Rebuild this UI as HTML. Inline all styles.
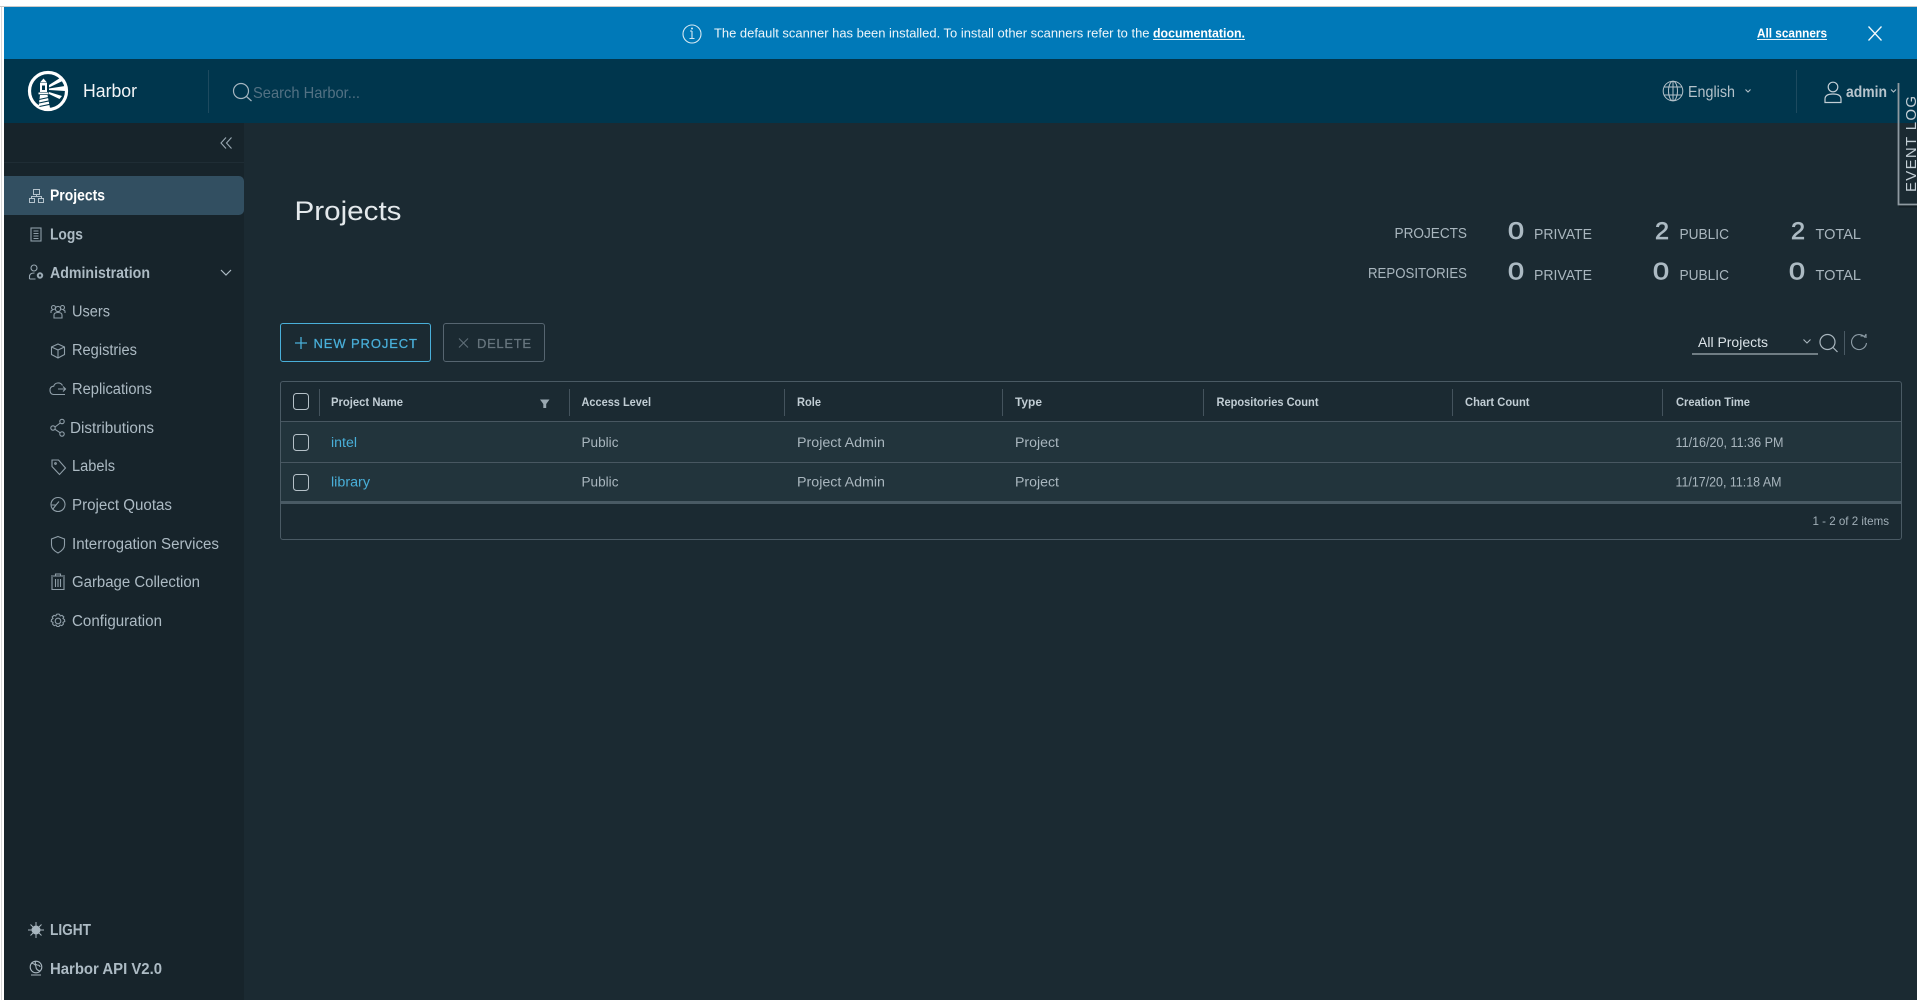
<!DOCTYPE html>
<html lang="en">
<head>
<meta charset="utf-8">
<title>Harbor</title>
<style>
html,body{margin:0;padding:0;background:#fff;width:1917px;height:1000px;overflow:hidden}
svg{display:block;position:absolute;left:0;top:0}
text{font-family:"Liberation Sans",sans-serif}
.nav{font-size:15.5px;fill:#adbbc4}
.b{font-weight:700}
.th{font-size:12px;font-weight:700;fill:#c1cdd4}
.td{font-size:13.5px;fill:#a9b6be}
.lnk{font-size:13.5px;fill:#49afd9}
.st{font-size:14.5px;fill:#a9b6be}
.num{font-size:24px;fill:#acbac3;stroke:#acbac3;stroke-width:.7px}
.ic{fill:none;stroke:#8f9ea8;stroke-width:1.1}
</style>
</head>
<body>
<svg width="1917" height="1000" viewBox="0 0 1917 1000" xmlns="http://www.w3.org/2000/svg">
<!-- surfaces -->
<rect width="1917" height="1000" fill="#fff"/>
<rect x="0" y="6" width="1917" height="1" fill="#c9c9c9"/>
<rect x="1" y="7" width="1" height="993" fill="#d8d8d8"/>
<rect x="4" y="7" width="1913" height="52" fill="#0079b8"/>
<rect x="4" y="59" width="1913" height="64" fill="#00364d"/>
<rect x="244" y="123" width="1673" height="877" fill="#1b2a32"/>
<rect x="4" y="123" width="240" height="877" fill="#17242b"/>
<rect x="4" y="162" width="240" height="1" fill="#1f2d35"/>
<path d="M4 176H239a5 5 0 0 1 5 5V210a5 5 0 0 1-5 5H4z" fill="#324f61"/>

<!-- banner -->
<g fill="none" stroke="#d5e8f2" stroke-width="1.1">
<circle cx="692" cy="34" r="9"/>
<path d="M692 31v7M689.5 38.5h5M690 31h2"/>
</g>
<circle cx="692" cy="28.5" r="1" fill="#d5e8f2"/>
<text x="714" y="37.5" font-size="13" fill="#eef6fa" textLength="435.5" lengthAdjust="spacingAndGlyphs">The default scanner has been installed. To install other scanners refer to the</text>
<text x="1153" y="37.5" font-size="13" font-weight="700" fill="#fff" textLength="92" lengthAdjust="spacingAndGlyphs">documentation.</text>
<rect x="1153" y="39" width="92" height="1" fill="#e6f2f8"/>
<text x="1757" y="37.5" font-size="13" font-weight="700" fill="#fff" textLength="70" lengthAdjust="spacingAndGlyphs">All scanners</text>
<rect x="1757" y="39" width="70" height="1" fill="#e6f2f8"/>
<path d="M1868.5 26.5l13 14M1881.5 26.5l-13 14" stroke="#f2f8fb" stroke-width="1.3" fill="none"/>

<!-- header -->
<circle cx="48" cy="91" r="18.5" fill="none" stroke="#fff" stroke-width="3.2"/>
<g fill="#fff">
<path d="M43.500 78.500l3.500 4h-7z"/>
<path d="M40 83h7v9h-7z"/>
<rect x="38.500" y="92.500" width="10" height="1.800"/>
<path d="M40 95h7.500l2.500 13-5 1.500-6.500-2.500z"/>
<path d="M49 85l11-7 2.500 3L49 87.500zM49 88.500l16-2.500v5l-16-1zM49 92l13 4-2.500 3L49 94z"/>
</g>
<rect x="42" y="85.500" width="3" height="4.500" fill="#00364d"/>
<path d="M39 99.500l9.500-2M39 103l10.500-2.200M39.500 106.500l10.500-2.200" stroke="#00364d" stroke-width="1.100"/>
<text x="83" y="97" font-size="18" fill="#f2f5f7" textLength="54" lengthAdjust="spacingAndGlyphs">Harbor</text>
<rect x="208" y="70" width="1" height="43" fill="#1d4a5f"/>
<g fill="none" stroke="#a5b6c0" stroke-width="1.2">
<circle cx="241" cy="91" r="7.5"/><path d="M246.5 96.5l5 4.5"/>
</g>
<text x="253" y="98" font-size="16" fill="#527183" textLength="107" lengthAdjust="spacingAndGlyphs">Search Harbor...</text>

<g fill="none" stroke="#b4c2ca" stroke-width="1">
<circle cx="1673" cy="91" r="9.8"/>
<ellipse cx="1673" cy="91" rx="4.5" ry="9.8"/>
<path d="M1673 81.2v19.6M1664 87h18M1664 95h18"/>
</g>
<text x="1688" y="97" font-size="16" fill="#b4c2ca" textLength="47" lengthAdjust="spacingAndGlyphs">English</text>
<path d="M1745.5 89.5l2.5 2.5 2.5-2.5" fill="none" stroke="#b4c2ca" stroke-width="1.1"/>
<rect x="1796" y="70" width="1" height="43" fill="#1d4a5f"/>
<g fill="none" stroke="#c2ced5" stroke-width="1.2">
<circle cx="1833" cy="87" r="4.8"/>
<path d="M1825 102.5v-3.5q0-5 8-5t8 5v3.5z"/>
</g>
<text x="1846" y="97" font-size="16" fill="#b8c5cd" font-weight="700" textLength="41" lengthAdjust="spacingAndGlyphs">admin</text>
<path d="M1891 89.5l2.5 2.5 2.5-2.5" fill="none" stroke="#b4c2ca" stroke-width="1.1"/>

<!-- event log tab -->
<rect x="1899" y="204.500" width="18" height="3" fill="#0d161b" opacity=".55"/>
<path d="M1898.5 83V204.500H1917" fill="none" stroke="#8f9aa1" stroke-width="1.8"/>
<text transform="translate(1916 192) rotate(-90)" font-size="15" fill="#c3ced5" textLength="96" lengthAdjust="spacing">EVENT LOG</text>

<!-- sidebar -->
<path d="M226 137.5l-5 5.5 5 5.5M231.5 137.5l-5 5.5 5 5.5" fill="none" stroke="#9aa9b3" stroke-width="1.1"/>
<g fill="none" stroke="#b5c3cc" stroke-width="1">
<rect x="33.5" y="189.5" width="6" height="5"/><rect x="29.5" y="198.5" width="5" height="4"/><rect x="38.5" y="198.5" width="5" height="4"/>
<path d="M36.5 194.5v2M31.5 198.5v-2h10v2"/>
</g>
<text x="50" y="200.5" class="nav b" style="fill:#fff" textLength="55" lengthAdjust="spacingAndGlyphs">Projects</text>
<g fill="none" stroke="#8f9ea8" stroke-width="1.1">
<rect x="31" y="228" width="10" height="13"/><path d="M33.5 231h5M33.5 233.5h5M33.5 236h5M33.5 238.5h5"/>
</g>
<text x="50" y="239.300" class="nav b" textLength="33" lengthAdjust="spacingAndGlyphs">Logs</text>
<g fill="none" stroke="#9aa9b3" stroke-width="1.1">
<circle cx="34" cy="268" r="3"/><path d="M29.5 279v-2.500q0-3.500 5-3.500M29.500 279h6"/>
<circle cx="40" cy="275.500" r="2.200" stroke-width="2"/>
</g>
<text x="50" y="278" class="nav b" textLength="100" lengthAdjust="spacingAndGlyphs">Administration</text>
<path d="M221 270l5 5 5-5" fill="none" stroke="#adbbc4" stroke-width="1.2"/>

<g class="ic">
<!-- users -->
<circle cx="58" cy="309" r="2.600"/><circle cx="53.500" cy="307.500" r="2"/><circle cx="62.500" cy="307.500" r="2"/>
<path d="M54 318v-3q0-2.500 4-2.500t4 2.500v3zM51 313v-1.500q0-1.500 2-1.500M65 313v-1.500q0-1.500-2-1.500"/>
<!-- registries -->
<path d="M58 344l6.500 3v7.500L58 358l-6.500-3.500V347zM51.500 347l6.500 3 6.500-3M58 350v8"/>
<!-- replications -->
<path d="M62.500 385.500q-1.500-2.800-5-2.500-3 .3-3.800 3.200-3.700 .3-3.700 4 0 3.800 3.500 4.300H65"/>
<path d="M58 389h8M63 386.500l2.500 2.500-2.500 2.500"/>
<!-- distributions -->
<circle cx="62" cy="421.500" r="2.200"/><circle cx="53" cy="428" r="2.200"/><circle cx="62" cy="434" r="2.200"/>
<path d="M55 427l5.200-4M55 429.300l5.200 3.500"/>
<!-- labels -->
<path d="M52 460h6.500l7 8-6 6.500-7.500-8z"/><circle cx="55.500" cy="463.500" r=".8"/>
<!-- quotas -->
<circle cx="58" cy="504.500" r="7"/><path d="M51 505h5l3-3.500M52.500 509.500l3.500-4.500"/>
<!-- shield -->
<path d="M58 536.500l6.500 2.500v6q0 4.500-6.500 8-6.500-3.500-6.500-8v-6z"/>
<!-- trash -->
<path d="M52 577v12.500h12V577M51 576h14M55.500 576v-2h5v2M55.500 579v8M58 579v8M60.500 579v8"/>
<!-- gear -->
<circle cx="58" cy="621" r="2.800"/>
<path d="M58 614l1.500 .3.700 1.700 1.800-.6 1.800 1.500-.8 1.700 1.500 1 .3 1.800-1.800 1 .4 1.700-1.600 1.500-1.800-.6-1 1.500h-2l-1-1.500-1.800.6-1.600-1.500.4-1.700-1.800-1 .3-1.800 1.500-1-.8-1.700 1.800-1.500 1.800.6.700-1.700z"/>
</g>
<text x="72" y="316.500" class="nav" textLength="38" lengthAdjust="spacingAndGlyphs">Users</text>
<text x="72" y="355.200" class="nav" textLength="65" lengthAdjust="spacingAndGlyphs">Registries</text>
<text x="72" y="394" class="nav" textLength="80" lengthAdjust="spacingAndGlyphs">Replications</text>
<text x="70" y="433" class="nav" textLength="84" lengthAdjust="spacingAndGlyphs">Distributions</text>
<text x="72" y="471" class="nav" textLength="43" lengthAdjust="spacingAndGlyphs">Labels</text>
<text x="72" y="510" class="nav" textLength="100" lengthAdjust="spacingAndGlyphs">Project Quotas</text>
<text x="72" y="549" class="nav" textLength="147" lengthAdjust="spacingAndGlyphs">Interrogation Services</text>
<text x="72" y="587" class="nav" textLength="128" lengthAdjust="spacingAndGlyphs">Garbage Collection</text>
<text x="72" y="626" class="nav" textLength="90" lengthAdjust="spacingAndGlyphs">Configuration</text>

<circle cx="36" cy="930" r="4.500" fill="#a8b6bf"/>
<path d="M36 922v16M28 930h16M30.500 924.500l11 11M41.500 924.500l-11 11" stroke="#a8b6bf" stroke-width="1"/>
<text x="50" y="935" class="nav b" textLength="41" lengthAdjust="spacingAndGlyphs">LIGHT</text>
<g fill="none" stroke="#a8b6bf" stroke-width="1.1">
<circle cx="36" cy="967" r="5.800"/><path d="M31 963q5 1 5 4t4 4M36 961q-2 3 1 4 3 0 3 2M31 975h10"/>
</g>
<text x="50" y="974" class="nav b" textLength="112" lengthAdjust="spacingAndGlyphs">Harbor API V2.0</text>

<!-- page title -->
<text x="294.500" y="220" font-size="27" fill="#e4e9ec" textLength="107" lengthAdjust="spacingAndGlyphs">Projects</text>

<!-- stats -->
<text x="1394.500" y="238" class="st" textLength="72.500" lengthAdjust="spacingAndGlyphs">PROJECTS</text>
<text x="1368" y="278" class="st" textLength="99" lengthAdjust="spacingAndGlyphs">REPOSITORIES</text>
<text x="1508" y="239" class="num" textLength="16" lengthAdjust="spacingAndGlyphs">0</text>
<text x="1534" y="239" class="st" textLength="58" lengthAdjust="spacingAndGlyphs">PRIVATE</text>
<text x="1655" y="239" class="num" textLength="14" lengthAdjust="spacingAndGlyphs">2</text>
<text x="1679.500" y="239" class="st" textLength="49.500" lengthAdjust="spacingAndGlyphs">PUBLIC</text>
<text x="1791" y="239" class="num" textLength="14" lengthAdjust="spacingAndGlyphs">2</text>
<text x="1815.500" y="239" class="st" textLength="45.500" lengthAdjust="spacingAndGlyphs">TOTAL</text>
<text x="1508" y="279.500" class="num" textLength="16" lengthAdjust="spacingAndGlyphs">0</text>
<text x="1534" y="280" class="st" textLength="58" lengthAdjust="spacingAndGlyphs">PRIVATE</text>
<text x="1653" y="279.500" class="num" textLength="16" lengthAdjust="spacingAndGlyphs">0</text>
<text x="1679.500" y="280" class="st" textLength="49.500" lengthAdjust="spacingAndGlyphs">PUBLIC</text>
<text x="1789" y="279.500" class="num" textLength="16" lengthAdjust="spacingAndGlyphs">0</text>
<text x="1815.500" y="280" class="st" textLength="45.500" lengthAdjust="spacingAndGlyphs">TOTAL</text>

<!-- action buttons -->
<rect x="280.500" y="323.500" width="150" height="38" rx="2.500" fill="none" stroke="#49afd9"/>
<path d="M301 337v12M295 343h12" stroke="#49afd9" stroke-width="1.300"/>
<text x="313.500" y="347.800" font-size="13" fill="#49afd9" stroke="#49afd9" stroke-width=".25" textLength="103.500" lengthAdjust="spacing">NEW PROJECT</text>
<rect x="443.500" y="323.500" width="101" height="38" rx="2.500" fill="none" stroke="#566570"/>
<path d="M459 338.500l9 9M468 338.500l-9 9" stroke="#5f6e78" stroke-width="1.100"/>
<text x="477" y="347.800" font-size="13" fill="#67757e" stroke="#67757e" stroke-width=".25" textLength="54" lengthAdjust="spacing">DELETE</text>

<!-- filter controls -->
<text x="1698" y="347" font-size="14" fill="#dbe3e8" textLength="70" lengthAdjust="spacingAndGlyphs">All Projects</text>
<rect x="1692" y="353.500" width="126" height="1" fill="#c4d0d7"/>
<path d="M1803.500 339.500l3.500 3.500 3.500-3.500" fill="none" stroke="#a9b6be" stroke-width="1.100"/>
<g fill="none" stroke="#a9b6be" stroke-width="1.200">
<circle cx="1827.500" cy="342" r="7.500"/><path d="M1833 347.500l4.500 4.500"/>
</g>
<rect x="1844" y="331" width="1" height="24" fill="#4a5a64"/>
<g fill="none" stroke="#8e9da7" stroke-width="1.100">
<path d="M1865 337.500a7.500 7.500 0 1 0 1.500 5.500"/><path d="M1860.500 336h5v-.5l.5 -1.500v4"/>
</g>

<!-- table -->
<rect x="280.500" y="381.500" width="1621" height="158" rx="2.500" fill="#1b2a32" stroke="#4a5a64"/>
<rect x="281" y="422" width="1620" height="80" fill="#22343c"/>
<rect x="281" y="421" width="1620" height="1" fill="#485761"/>
<rect x="281" y="462" width="1620" height="1" fill="#485761"/>
<rect x="281" y="501" width="1620" height="3" fill="#495a64"/>
<g fill="#44535d">
<rect x="319" y="389" width="1" height="27"/><rect x="569" y="389" width="1" height="27"/>
<rect x="784" y="389" width="1" height="27"/><rect x="1002" y="389" width="1" height="27"/>
<rect x="1203" y="389" width="1" height="27"/><rect x="1452" y="389" width="1" height="27"/>
<rect x="1662" y="389" width="1" height="27"/>
</g>
<g fill="none" stroke="#b5c1c8" stroke-width="1">
<rect x="293.500" y="393.500" width="15" height="16" rx="3"/>
<rect x="293.500" y="434.500" width="15" height="16" rx="3"/>
<rect x="293.500" y="474.500" width="15" height="16" rx="3"/>
</g>
<path d="M540 399.500h9.500l-3.300 4.500v4h-2.900v-4z" fill="#9aa8b1"/>
<text x="331" y="406" class="th" textLength="72" lengthAdjust="spacingAndGlyphs">Project Name</text>
<text x="581.500" y="406" class="th" textLength="69.500" lengthAdjust="spacingAndGlyphs">Access Level</text>
<text x="797" y="406" class="th" textLength="24" lengthAdjust="spacingAndGlyphs">Role</text>
<text x="1015" y="406" class="th" textLength="27" lengthAdjust="spacingAndGlyphs">Type</text>
<text x="1216.500" y="406" class="th" textLength="102" lengthAdjust="spacingAndGlyphs">Repositories Count</text>
<text x="1465" y="406" class="th" textLength="64.500" lengthAdjust="spacingAndGlyphs">Chart Count</text>
<text x="1676" y="406" class="th" textLength="74" lengthAdjust="spacingAndGlyphs">Creation Time</text>

<text x="331" y="447" class="lnk" textLength="26" lengthAdjust="spacingAndGlyphs">intel</text>
<text x="581.500" y="447" class="td" textLength="37" lengthAdjust="spacingAndGlyphs">Public</text>
<text x="797" y="447" class="td" textLength="88" lengthAdjust="spacingAndGlyphs">Project Admin</text>
<text x="1015" y="447" class="td" textLength="44" lengthAdjust="spacingAndGlyphs">Project</text>
<text x="1675.500" y="447" class="td" textLength="108" lengthAdjust="spacingAndGlyphs">11/16/20, 11:36 PM</text>

<text x="331" y="486.500" class="lnk" textLength="39" lengthAdjust="spacingAndGlyphs">library</text>
<text x="581.500" y="486.500" class="td" textLength="37" lengthAdjust="spacingAndGlyphs">Public</text>
<text x="797" y="486.500" class="td" textLength="88" lengthAdjust="spacingAndGlyphs">Project Admin</text>
<text x="1015" y="486.500" class="td" textLength="44" lengthAdjust="spacingAndGlyphs">Project</text>
<text x="1675.500" y="486.500" class="td" textLength="106" lengthAdjust="spacingAndGlyphs">11/17/20, 11:18 AM</text>

<text x="1812.500" y="525" font-size="12" fill="#a0aeb7" textLength="76.500" lengthAdjust="spacingAndGlyphs">1 - 2 of 2 items</text>
</svg>
</body>
</html>
